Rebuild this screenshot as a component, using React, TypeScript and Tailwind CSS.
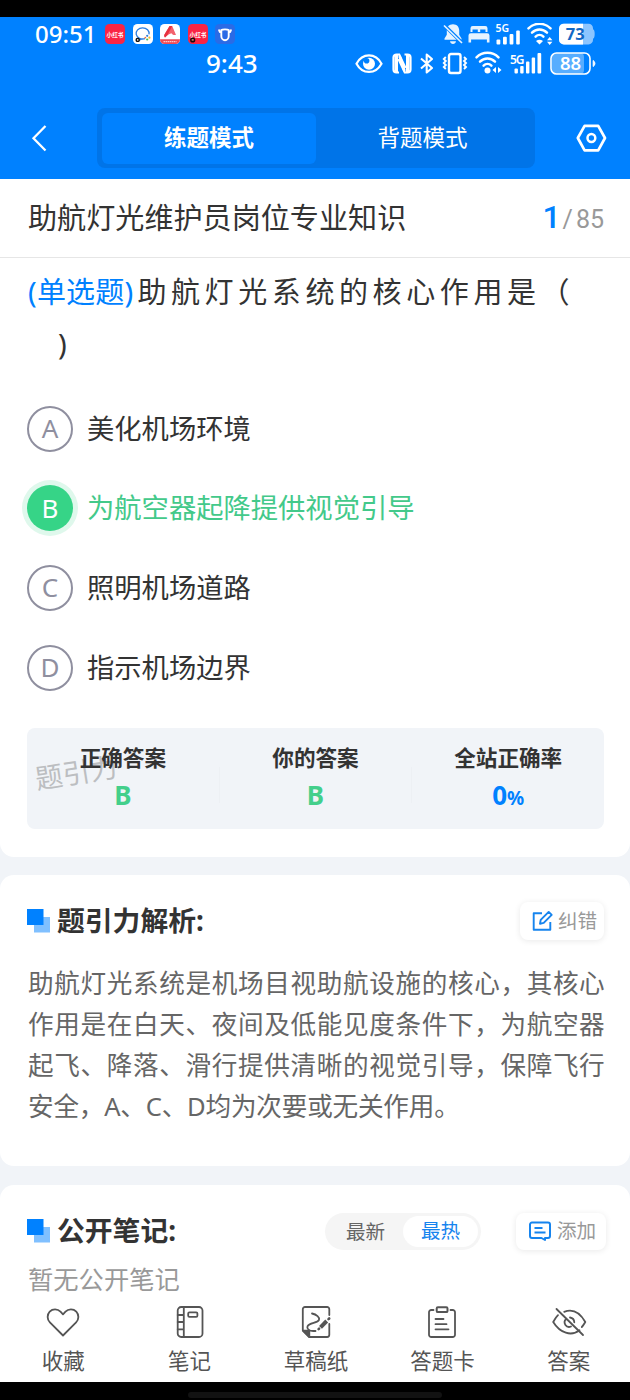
import type { ReactNode } from 'react';
import clsx from 'clsx';

type Option = { key: string; text: string; correct?: boolean };

const options: Option[] = [
  { key: 'A', text: '美化机场环境' },
  { key: 'B', text: '为航空器起降提供视觉引导', correct: true },
  { key: 'C', text: '照明机场道路' },
  { key: 'D', text: '指示机场边界' }
];

const analysis = [
  '助航灯光系统是机场目视助航设施的核心，其核心',
  '作用是在白天、夜间及低能见度条件下，为航空器',
  '起飞、降落、滑行提供清晰的视觉引导，保障飞行'
];

function RedBookIcon({ dot }: { dot?: boolean }) {
  return (
    <svg className="h-5 w-5" viewBox="0 0 20 20">
      <rect width="20" height="20" rx="4.5" fill="#fa2444" />
      <text x="10" y="12.6" textAnchor="middle" fontSize="5.6" fontWeight="700" fill="#fff">
        小红书
      </text>
      {dot ? <circle cx="4.7" cy="16" r="2.6" fill="#1a0a0c" /> : null}
      {dot ? <rect x="3.7" y="15.2" width="2" height="1.4" fill="#e88" /> : null}
    </svg>
  );
}

function AppIcons() {
  return (
    <div className="ml-[9px] flex gap-[7.4px]">
      <RedBookIcon />
      <svg className="h-5 w-5" viewBox="0 0 20 20" fill="none">
        <rect width="20" height="20" rx="4.5" fill="#fff" />
        <path d="M12 14.600A6.500 5.600 0 1 1 16 10.400M6 14l-.4 2.400 2.800-1.300" stroke="#2b7de0" strokeWidth="1.3" />
        <circle cx="14.200" cy="11.800" r="1.1" fill="#2b7de0" />
        <circle cx="16.400" cy="13.700" r="1.1" fill="#f9b52c" />
        <circle cx="14.200" cy="15.500" r="1.1" fill="#3cba54" />
        <circle cx="12.300" cy="13.600" r=".9" fill="#ef6c3a" />
        <rect x="2.6" y="13.8" width="4.2" height="4.2" rx="1.6" fill="#111" />
        <rect x="4" y="15.2" width="1.4" height="1.4" fill="#fff" />
      </svg>
      <svg className="h-5 w-5" viewBox="0 0 20 20">
        <rect width="20" height="20" rx="4.5" fill="#fff" />
        <path d="M0 15.2h20v.3a4.5 4.5 0 0 1-4.5 4.5h-11A4.5 4.5 0 0 1 0 15.5z" fill="#ee4a55" />
        <path d="M9.6 2h2.6L16 11c-2.2.2-3.600-.4-4.600-1.800C8.900 10.100 6.600 11.600 5 13.400c-.8-.8-1-1.700-.5-2.800z" fill="#f2616c" />
        <path d="M9.6 2h2.600L7.500 11 5 13.400c-.8-.8-1-1.700-.5-2.800z" fill="#e8303f" />
        <path d="M3.500 17.600h13" stroke="#fbc5c9" strokeWidth="1.300" strokeDasharray="1.500 .5" />
      </svg>
      <RedBookIcon dot />
      <svg className="h-5 w-5" viewBox="0 0 20 20" fill="none">
        <rect width="20" height="20" rx="4.5" fill="#2a6be6" />
        <path
          d="M6.300 6V12a3.700 4.200 0 0 0 7.400 0V6C12.500 5.200 7.500 5.200 6.300 6ZM6.300 8H4.800L3.800 5.500M13.700 8h1.500l1-2.500"
          stroke="#fff"
          strokeWidth="1.900"
          strokeLinejoin="round"
        />
      </svg>
    </div>
  );
}

function WifiArcs() {
  return (
    <g fill="none" stroke="#fff" strokeWidth="2.500" strokeLinecap="round">
      <path d="M1.500 6.400a15.500 15.500 0 0 1 22 0" />
      <path d="M5 10.600a10.500 10.500 0 0 1 15 0" />
      <path d="M8.600 14.600a5.700 5.700 0 0 1 7.800 0" />
    </g>
  );
}

function StatusIconsTop() {
  return (
    <div className="ml-auto flex items-center">
      <svg className="mr-[1px] h-[22px] w-[20px]" viewBox="0 0 20 22">
        <path
          d="M10 1.200c4 0 6.200 2.900 6.200 6.300v4.200l2.300 3.800v1.300H1.500v-1.300l2.300-3.800V7.500c0-3.400 2.200-6.300 6.200-6.300zM7 18.300h6c-.3 1.900-1.500 2.700-3 2.700s-2.700-.8-3-2.700z"
          fill="#e6f3ff"
        />
        <path d="M1.500 2.500 19 19.800" stroke="#0081ff" strokeWidth="3.600" />
        <path d="M1 2.500 19 20" stroke="#e6f3ff" strokeWidth="1.700" />
      </svg>
      <svg className="ml-[4px] h-[22px] w-[22px]" viewBox="0 0 22 22" fill="#e6f3ff">
        <path d="M2.500 9V5.200A2.200 2.200 0 0 1 4.700 3h12.600a2.200 2.200 0 0 1 2.200 2.200V9h-2V6.500h-5.300V9H9.800V6.500H4.500V9z" />
        <path d="M.5 19.500v-7a2.300 2.300 0 0 1 2.300-2.300h16.400a2.300 2.300 0 0 1 2.300 2.300v7h-2.600v-3H3.100v3z" />
      </svg>
      <svg className="ml-[6px] h-[22px] w-[27px] overflow-visible" viewBox="0 0 27 22" fill="#fff">
        <text x="-.5" y="9" fontSize="10.500" fontWeight="600" textLength="13.500">
          5G
        </text>
        <rect x=".5" y="16.500" width="3.800" height="5" rx="1" />
        <rect x="7" y="13.800" width="3.800" height="7.700" rx="1" />
        <rect x="13.600" y="11" width="3.800" height="10.500" rx="1" />
        <rect x="20.200" y="7.500" width="3.600" height="14" rx="1" />
      </svg>
      <svg className="ml-[4px] h-[22px] w-[27px]" viewBox="0 0 27 22" fill="#fff">
        <g transform="translate(0 -1)">
          <WifiArcs />
        </g>
        <path d="M9 18q3.500-2.400 7 0l-3.500 3.500z" />
        <path d="M22.700 14l2.700 3.200H20zM22.700 22l2.700-3.200H20z" />
      </svg>
      <svg className="ml-[4px] h-[22px] w-[38px]" viewBox="0 0 38 22">
        <path
          d="M5.500.8h25a4.500 4.500 0 0 1 4.500 4.500v.9c2.300.3 2.300 9.300 0 9.600v1.100a4.500 4.500 0 0 1-4.500 4.500h-25z"
          fill="#8cc5ff"
        />
        <path d="M5.500.8H25v20.600H5.500A4.500 4.500 0 0 1 1 16.900V5.300A4.500 4.500 0 0 1 5.500.8z" fill="#fff" />
        <text x="17.300" y="17" fontSize="16.500" fontWeight="700" textAnchor="middle" fill="#1268c4">
          73
        </text>
      </svg>
    </div>
  );
}

function StatusIconsBottom() {
  return (
    <div className="ml-auto flex items-center">
      <svg className="h-[25px] w-[28px]" viewBox="0 0 28 25">
        <path
          d="M1.500 12.700C7.500 1.700 20.500 1.700 26.500 12.700 20.500 23.700 7.500 23.700 1.500 12.700Z"
          fill="none"
          stroke="#fff"
          strokeWidth="2.200"
        />
        <circle cx="14" cy="12.700" r="6" fill="#fff" />
        <circle cx="11.600" cy="9.700" r="2.800" fill="#0081ff" />
      </svg>
      <svg className="ml-[9px] h-[25px] w-[20px]" viewBox="0 0 20 25" fill="none" stroke="#fff">
        <path d="M7 21.500H4.500a3 3 0 0 1-3-3v-12a3 3 0 0 1 3-3h2.700l6.300 13.500" strokeWidth="2.200" />
        <path d="M12.500 3.500h3a3 3 0 0 1 3 3v12a3 3 0 0 1-3 3h-2.700L6.500 8" strokeWidth="2.200" />
        <path d="M4.300 4v17M15.700 4v17" strokeWidth="3.400" />
        <path d="m7.500 5 5 15" strokeWidth="2.600" />
      </svg>
      <svg className="ml-[7px] h-[25px] w-[16px]" viewBox="0 0 16 25" fill="none" stroke="#fff" strokeWidth="2.100">
        <path d="m2 7.500 11 9.500-5.300 4.500v-18L13 8 2 17.500" strokeLinejoin="round" />
      </svg>
      <svg className="ml-[6px] h-[25px] w-[28px]" viewBox="0 0 28 25" fill="none" stroke="#fff">
        <rect x="8" y="3" width="11.500" height="19" rx="2" strokeWidth="2.400" />
        <path d="m4.800 6-2 2 2 2-2 2 2 2-2 2 2 2M23 6l2 2-2 2 2 2-2 2 2 2-2 2" strokeWidth="1.900" />
      </svg>
      <svg className="ml-[5px] h-[25px] w-[30px]" viewBox="0 0 30 25" fill="#fff">
        <g transform="translate(1 0)">
          <WifiArcs />
        </g>
        <circle cx="13.500" cy="19.500" r="3" />
        <path d="M22 16v6l-3.500-3zM24 16v6l3.500-3z" />
      </svg>
      <svg className="ml-[6px] h-[25px] w-[33px] overflow-visible" viewBox="0 0 33 25" fill="#fff">
        <text x="0" y="13" fontSize="12" fontWeight="600" textLength="14.500">
          5G
        </text>
        <rect x="4.500" y="17.500" width="3.400" height="5" rx="1" />
        <rect x="10.200" y="15" width="3.400" height="7.500" rx="1" />
        <rect x="16" y="10.500" width="3.400" height="12" rx="1" />
        <rect x="21.700" y="6.500" width="3.400" height="16" rx="1" />
        <rect x="27.500" y="2" width="3.700" height="20.500" rx="1" />
      </svg>
      <svg className="mr-px ml-[6px] h-[25px] w-[48px]" viewBox="0 0 48 25">
        <rect x="3" y="2" width="32" height="21" rx="4" fill="#57adff" />
        <rect x="2" y="2" width="39" height="21" rx="5.500" fill="none" stroke="#fff" strokeWidth="1.600" />
        <path d="M44.200 9.500v6a3.500 3.500 0 0 0 0-6z" fill="#fff" stroke="#fff" />
        <text x="21.500" y="19" fontSize="18.500" fontWeight="600" textAnchor="middle" fill="#fff">
          88
        </text>
      </svg>
    </div>
  );
}

function SectionTitle({ children }: { children: ReactNode }) {
  return (
    <div className="flex items-center">
      <svg className="h-6 w-6" viewBox="0 0 24 24">
        <rect x="7" y="8" width="16" height="15.500" fill="#80c0ff" />
        <rect width="16.500" height="16" fill="#0081ff" />
      </svg>
      <h2 className="mb-[2px] ml-[6px] text-[27.8px] leading-[36px] font-bold whitespace-nowrap text-[#333]">{children}</h2>
    </div>
  );
}

function AnswerStat({ label, children }: { label: string; children: ReactNode }) {
  return (
    <div className="flex-1 text-center font-bold">
      <div className="text-[21.6px] leading-[30px] text-[#333]">{label}</div>
      <div className="mt-[4px] text-[26px] leading-[36px]">{children}</div>
    </div>
  );
}

const iconProps = {
  className: 'h-9 w-9',
  viewBox: '0 0 36 36',
  fill: 'none',
  stroke: '#555',
  strokeWidth: 1.8,
  strokeLinecap: 'round',
  strokeLinejoin: 'round'
} as const;

const tabs = [
  {
    label: '收藏',
    icon: (
      <svg {...iconProps}>
        <path d="M18 31.500 4.900 18.300a7.700 7.700 0 0 1-.2-10.700c3-3 7.900-2.900 10.800.1L18 10.300l2.500-2.600c2.900-3 7.800-3.100 10.800-.1a7.700 7.700 0 0 1-.2 10.700z" />
      </svg>
    )
  },
  {
    label: '笔记',
    icon: (
      <svg {...iconProps}>
        <rect x="5.700" y="3" width="24.800" height="30" rx="3.500" />
        <path d="M11.800 3v30M5.700 11h6M5.700 18h6M5.700 25.300h6" />
        <rect x="16.200" y="8.300" width="9.200" height="4.600" rx="1.200" />
      </svg>
    )
  },
  {
    label: '草稿纸',
    icon: (
      <svg {...iconProps}>
        <path d="M31.300 11V5.200A2.200 2.200 0 0 0 29.100 3H7a2.200 2.200 0 0 0-2.200 2.200v21.300l6.400 6.500h17.900a2.200 2.200 0 0 0 2.200-2.200V20" />
        <path d="M5 26.700h6.300v6.100z" fill="#555" />
        <path d="M14 9.500c4.500 1 8 3.800 7 6.300-1.300 3.300-9.800 2.700-11.500 6.500-1 2.500 1.700 4.700 5.700 4.700h2.300" />
        <path d="m22.500 23.300 6.200-6.300" strokeWidth="4" strokeLinecap="butt" />
        <path d="m20.600 25.200.5-.5M30.500 15.200l.7-.7" strokeWidth="2.600" />
      </svg>
    )
  },
  {
    label: '答题卡',
    icon: (
      <svg {...iconProps}>
        <path d="M9.500 6H7.300A2.300 2.300 0 0 0 5 8.300v22.400A2.300 2.300 0 0 0 7.300 33h21.400a2.300 2.300 0 0 0 2.300-2.300V8.300A2.300 2.300 0 0 0 28.700 6h-2.200" />
        <rect x="12.700" y="3.300" width="10.800" height="4.800" rx="1.200" strokeWidth="2" />
        <path d="M11.500 15h8M11.500 20.200h11M11.500 25.300h13" />
      </svg>
    )
  },
  {
    label: '答案',
    icon: (
      <svg {...iconProps}>
        <path d="M7 11.200c-1.600 1.500-3 3.500-4.800 6.800 6.800 11 18 14.800 26.300 8.200M13.200 7.800C21 4.800 28.700 8.200 34.300 18c-1.200 2.100-2.200 3.700-3.500 5" />
        <path d="M15 15.200c-3.500 3.500.3 9.300 5 7.300M19 13.500c2.500.4 4.200 2.300 4.300 4.800M5.500 5 32 31" />
      </svg>
    )
  }
];

export default function App() {
  return (
    <div className="flex h-[1400px] w-[630px] flex-col overflow-hidden bg-[#f1f4f8] font-['Noto_Sans','Noto_Sans_CJK_SC',sans-serif]">
      <div className="h-[17px] shrink-0 bg-black" />

      <header className="h-[162px] shrink-0 bg-[#0081ff] text-white">
        <div className="flex h-[34px] items-center pr-[34px] pl-[35px]">
          <span className="text-[24px] leading-none font-medium">09:51</span>
          <AppIcons />
          <StatusIconsTop />
        </div>
        <div className="flex h-[25px] items-center pr-[32px] pl-[206px]">
          <span className="mb-[2px] text-[26px] leading-none font-medium">9:43</span>
          <StatusIconsBottom />
        </div>
        <div className="mt-8 flex h-[60px] items-center">
          <svg className="ml-[31px] h-8 w-[18px]" viewBox="0 0 18 32" fill="none" stroke="#fff" strokeWidth="2.300">
            <path d="M14.500 4 2.500 16.200l12 12.300" />
          </svg>
          <div className="ml-12 flex h-[60px] w-[438px] rounded-lg bg-[#0074e8] p-[5px] text-[22.5px] leading-[50px]">
            <div className="h-[51px] w-[214px] rounded-md bg-[#0081ff] text-center font-bold">练题模式</div>
            <div className="w-[213px] text-center">背题模式</div>
          </div>
          <svg className="ml-10 h-8 w-8" viewBox="0 0 32 32" fill="none" stroke="#fff" strokeWidth="2.700" strokeLinejoin="round">
            <path d="M9.600 3.800h13.600L30 16l-6.800 12.300H9.600L2.800 16z" />
            <circle cx="16.400" cy="16" r="3.900" strokeWidth="2.500" />
          </svg>
        </div>
      </header>

      <main className="flex min-h-0 flex-1 flex-col">
        <section className="h-[678px] shrink-0 rounded-b-[14px] bg-white">
          <div className="flex h-[79px] items-center justify-between border-b border-[#e6e6e6] pr-[26px] pl-7">
            <h1 className="text-[29.1px] leading-[36px] text-[#333]">助航灯光维护员岗位专业知识</h1>
            <div className="flex items-baseline font-['Roboto',sans-serif] text-[25px] text-[#999]">
              <span className="text-[32px] leading-[40px] font-medium text-[#0081ff]">1</span>
              <span className="mr-[3px] ml-[2px]">/</span>
              <span>85</span>
            </div>
          </div>

          <div className="px-7 pt-[8px] text-[29px] leading-[52px] text-[#333]">
            <p className="whitespace-nowrap">
              <span className="mr-[4px] tracking-[0.200px] text-[#0081ff]">(单选题)</span>
              <span className="tracking-[4.600px]">助航灯光系统的核心作用是（</span>
            </p>
            <p className="pl-[30px]">)</p>
          </div>

          <ul className="mt-[19px] px-[27px]">
            {options.map((option) => (
              <li key={option.key} className="flex h-[79.6px] items-center">
                <span
                  className={clsx(
                    'flex h-[46px] w-[46px] items-center justify-center rounded-full pb-px text-[26px] leading-none',
                    option.correct
                      ? 'bg-[#36d487] text-white ring-[5px] ring-[#dff8ec]'
                      : 'border-2 border-[#8f8f9f] text-[#8f8f9f]'
                  )}
                >
                  {option.key}
                </span>
                <span
                  className={clsx('ml-[14px] text-[27.3px] leading-[36px]', option.correct ? 'text-[#43c98a]' : 'text-[#333]')}
                >
                  {option.text}
                </span>
              </li>
            ))}
          </ul>

          <div className="relative mx-[27px] mt-[21px] flex h-[101px] w-[577px] rounded-lg bg-[#f1f4f8] pt-[15px]">
            <span className="absolute top-[25px] left-[8px] -rotate-[9deg] text-[27.500px] leading-[40px] text-[#bcbec1]">题引力</span>
            <div className="relative flex flex-1">
              <AnswerStat label="正确答案">
                <span className="text-[#43cf8b]">B</span>
              </AnswerStat>
              <div className="mt-6 h-9 w-px bg-[#edf0f4]" />
              <AnswerStat label="你的答案">
                <span className="text-[#43cf8b]">B</span>
              </AnswerStat>
              <div className="mt-6 h-9 w-px bg-[#edf0f4]" />
              <AnswerStat label="全站正确率">
                <span className="text-[#0081ff]">
                  0<span className="text-[19px]">%</span>
                </span>
              </AnswerStat>
            </div>
          </div>
        </section>

        <section className="mt-[18px] h-[291px] shrink-0 rounded-[14px] bg-white px-[27px] pt-[27px]">
          <div className="flex h-[38px] items-center justify-between">
            <SectionTitle>题引力解析:</SectionTitle>
            <button className="mr-[-1px] flex h-[38px] w-[84px] items-center rounded-lg bg-white pl-[12px] text-[19.6px] text-[#999] shadow-[0_1px_6px_rgba(0,0,0,0.09)]">
              <svg
                className="h-[22px] w-[22px]"
                viewBox="0 0 22 22"
                fill="none"
                stroke="#1684ee"
                strokeWidth="1.900"
                strokeLinejoin="round"
              >
                <path d="M10 3.300H1.700v16.500h16.600V12" />
                <path d="m8 13.700.7-3.800 8-8 3 3-8 8z" />
              </svg>
              <span className="ml-[4px] whitespace-nowrap">纠错</span>
            </button>
          </div>
          <div className="mt-[23px] ml-px text-[25.600px] leading-[41px] whitespace-nowrap text-[#666]">
            {analysis.map((line) => (
              <p key={line} className="tracking-[0.650px]">
                {line}
              </p>
            ))}
            <p className="tracking-[-0.200px]">安全，A、C、D均为次要或无关作用。</p>
          </div>
        </section>

        <section className="mt-[19px] min-h-0 flex-1 rounded-t-[14px] bg-white px-[27px] pt-[27px]">
          <div className="flex h-[38px] items-center">
            <SectionTitle>公开笔记:</SectionTitle>
            <div className="ml-auto flex h-[37px] w-[156px] items-center rounded-full bg-[#f5f5f5] p-[3px] text-[19.6px]">
              <span className="w-[75px] text-center leading-[31px] text-[#666]">最新</span>
              <span className="h-[31px] w-[75px] rounded-full bg-white text-center leading-[30px] text-[#1684ee]">最热</span>
            </div>
            <button className="mr-[-3px] ml-[35px] flex h-[37px] w-[90px] items-center rounded-lg bg-white pl-[12px] text-[19.6px] text-[#999] shadow-[0_1px_6px_rgba(0,0,0,0.09)]">
              <svg
                className="h-[24px] w-[24px]"
                viewBox="0 0 24 24"
                fill="none"
                stroke="#1684ee"
                strokeWidth="2"
                strokeLinejoin="round"
              >
                <path d="M4 3.500h16a2 2 0 0 1 2 2v11.500a2 2 0 0 1-2 2h-3v2L13.500 19H4a2 2 0 0 1-2-2V5.500a2 2 0 0 1 2-2z" />
                <path d="M6.500 9h8M6.500 13.500h11" />
              </svg>
              <span className="ml-[5px] whitespace-nowrap">添加</span>
            </button>
          </div>
          <p className="mt-[10px] ml-px text-[25.300px] leading-[38px] text-[#999]">暂无公开笔记</p>
        </section>
      </main>

      <nav className="flex h-[80px] w-[632px] shrink-0 bg-white pt-[2px] text-[21.500px] leading-[28px] text-[#555]">
        {tabs.map((tab) => (
          <div key={tab.label} className="flex flex-1 flex-col items-center">
            {tab.icon}
            <span className="mt-[7px]">{tab.label}</span>
          </div>
        ))}
      </nav>

      <footer className="flex h-[18px] shrink-0 justify-center bg-black pt-[10px]">
        <div className="h-[6px] w-[254px] rounded-full bg-[#121212]" />
      </footer>
    </div>
  );
}
